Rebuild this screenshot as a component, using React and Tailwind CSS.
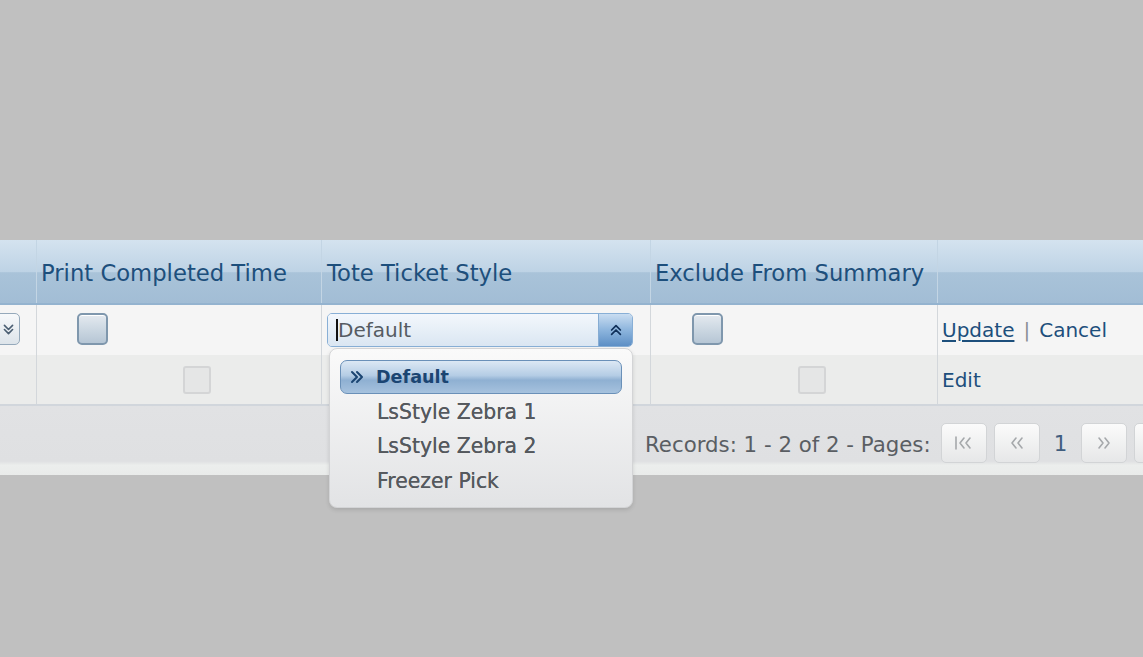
import React from 'react'

const font = { fontFamily: '"DejaVu Sans", Verdana, sans-serif' }

function DoubleChevron({ dir = 'up', color = '#1d3f66', size = 16 }) {
    const d = dir === 'up'
        ? 'M3 8 L8 3 L13 8 M3 13 L8 8 L13 13'
        : dir === 'down'
            ? 'M3 3 L8 8 L13 3 M3 8 L8 13 L13 8'
            : dir === 'right'
                ? 'M3 3 L8 8 L3 13 M8 3 L13 8 L8 13'
                : 'M8 3 L3 8 L8 13 M13 3 L8 8 L13 13'
    return (
        <svg width={size} height={size} viewBox="0 0 16 16">
            <path d={d} fill="none" stroke={color} strokeWidth="2" strokeLinecap="round" strokeLinejoin="round" />
        </svg>
    )
}

function EditCheckbox() {
    return <div className='w-[31px] h-[32px] rounded-[5px] border-2 border-[#7f97ad] bg-[linear-gradient(to_bottom,#e4e9ef_0%,#d3dde6_35%,#b6c6d5_100%)] shadow-[inset_0_1px_0_#ffffff]' />
}

function PlainCheckbox() {
    return <div className='w-[28px] h-[28px] rounded-[3px] border-2 border-[#d4d5d6] bg-[#e5e6e6]' />
}

function PagerButton({ children }) {
    return (
        <div className='w-[46px] h-[40px] rounded-[5px] border border-[#d2d4d6] bg-[linear-gradient(to_bottom,#fbfbfb,#e6e7e8)] flex items-center justify-center'>
            {children}
        </div>
    )
}

export default function App() {
    return (
        <div className='w-[1143px] h-[657px] bg-[#c0c0c0] overflow-hidden pt-[240px]' style={font}>
            <div className='w-[1200px] relative'>
                {/* header */}
                <div className='flex h-[65px] bg-[linear-gradient(to_bottom,#d4e3ef_0%,#bed3e5_50%,#a9c3d9_52%,#a2bdd5_100%)] border-b-2 border-[#94b3cf] text-[#1d4f7c] text-[22.7px]'>
                    <div className='w-[37px] border-r border-[#c3d5e4]' />
                    <div className='w-[285px] border-r border-[#c3d5e4] pl-[4px] pt-[16px]'>Print Completed Time</div>
                    <div className='w-[329px] border-r border-[#c3d5e4] pl-[5px] pt-[16px]'>Tote Ticket Style</div>
                    <div className='w-[287px] border-r border-[#c3d5e4] pl-[4px] pt-[16px]'>Exclude From Summary</div>
                    <div className='flex-1' />
                </div>

                {/* row 1 (edit) */}
                <div className='flex h-[50px] bg-[#f5f5f5] text-[20px] text-[#1d4f7c]'>
                    <div className='w-[37px] border-r border-[#d3d7db] pt-[8px] overflow-hidden'>
                        <div className='-ml-[14px] w-[34px] h-[32px] rounded-[5px] border border-[#95a9bb] bg-[linear-gradient(to_bottom,#f7f9fb,#dde4ea)] flex items-center justify-end pr-[4px]'>
                            <DoubleChevron dir='down' color='#4b5f73' size={13} />
                        </div>
                    </div>
                    <div className='w-[285px] border-r border-[#d3d7db] pl-[40px] pt-[8px]'>
                        <EditCheckbox />
                    </div>
                    <div className='w-[329px] border-r border-[#d3d7db] pl-[5px] pt-[8px] relative'>
                        <div className='w-[306px] h-[34px] rounded-[5px] border border-[#88afd6] flex overflow-hidden'>
                            <div className='flex-1 bg-[linear-gradient(to_bottom,#f3f7fc,#dae6f2)] flex items-center pl-[8px] text-[#555b62] text-[20px]'>
                                <span className='border-l-2 border-[#111] leading-[22px]'>Default</span>
                            </div>
                            <div className='w-[34px] bg-[linear-gradient(to_bottom,#c9ddf1_0%,#8db5dd_50%,#5d8fc5_100%)] border-l border-[#86acd3] flex items-center justify-center'>
                                <DoubleChevron dir='up' color='#10305a' size={14} />
                            </div>
                        </div>

                        {/* dropdown popup */}
                        <div className='absolute left-[7px] top-[43px] w-[304px] h-[160px] z-10 rounded-[8px] border border-[#d3d4d6] bg-[linear-gradient(to_bottom,#fafafa,#e2e3e5)] shadow-[0_2px_4px_rgba(0,0,0,0.12)] pt-[11px] px-[10px]'>
                            <div className='h-[34px] rounded-[7px] border border-[#6a90b8] bg-[linear-gradient(to_bottom,#dce8f4_0%,#b5cde5_45%,#8fb0d2_60%,#a6c2de_100%)] flex items-center pl-[8px] text-[#1b4572] font-bold text-[17.6px]'>
                                <DoubleChevron dir='right' color='#1b4572' size={16} />
                                <span className='ml-[11px]'>Default</span>
                            </div>
                            <div className='pl-[37px] text-[#55595e] text-[20.4px] [text-shadow:0_0_0.6px_#55595e]'>
                                <div className='h-[34px] leading-[34px] mt-[1px]'>LsStyle Zebra 1</div>
                                <div className='h-[35px] leading-[35px]'>LsStyle Zebra 2</div>
                                <div className='h-[35px] leading-[35px]'>Freezer Pick</div>
                            </div>
                        </div>
                    </div>
                    <div className='w-[287px] border-r border-[#d3d7db] pl-[41px] pt-[8px]'>
                        <EditCheckbox />
                    </div>
                    <div className='flex-1 pl-[4px] flex items-center'>
                        <span className='underline underline-offset-[3px]'>Update</span>
                        <span className='text-[#8a8f95] mx-[9px]'>|</span>
                        <span>Cancel</span>
                    </div>
                </div>

                {/* row 2 */}
                <div className='flex h-[51px] bg-[#ebeceb] border-b-2 border-[#d1d6dc] text-[20px] text-[#1d4f7c]'>
                    <div className='w-[37px] border-r border-[#d3d7db]' />
                    <div className='w-[285px] border-r border-[#d3d7db] pl-[146px] pt-[11px]'>
                        <PlainCheckbox />
                    </div>
                    <div className='w-[329px] border-r border-[#d3d7db]' />
                    <div className='w-[287px] border-r border-[#d3d7db] pl-[147px] pt-[11px]'>
                        <PlainCheckbox />
                    </div>
                    <div className='flex-1 pl-[4px] flex items-center'>Edit</div>
                </div>

                {/* footer / pager */}
                <div className='h-[69px] bg-[linear-gradient(to_bottom,#e1e2e4_0%,#dfe0e2_80%,#eceeed_86%,#e9ebea_100%)] flex items-start pt-[17px] text-[21.3px] text-[#5a5e63]'>
                    <div className='w-[645px]' />
                    <div className='flex items-center gap-[7px]'>
                        <span className='mr-[3px] pt-[3px]'>Records: 1 - 2 of 2 - Pages:</span>
                        <PagerButton>
                            <svg width="22" height="16" viewBox="0 0 22 16">
                                <path d="M3 2 L3 14 M11 3 L7 8 L11 13 M17 3 L13 8 L17 13" fill="none" stroke="#a5a8ab" strokeWidth="1.6" strokeLinecap="round" strokeLinejoin="round" />
                            </svg>
                        </PagerButton>
                        <PagerButton>
                            <svg width="16" height="16" viewBox="0 0 16 16">
                                <path d="M7 3 L3 8 L7 13 M13 3 L9 8 L13 13" fill="none" stroke="#a5a8ab" strokeWidth="1.6" strokeLinecap="round" strokeLinejoin="round" />
                            </svg>
                        </PagerButton>
                        <span className='text-[#3f5d7e] px-[7px] pt-[2px]'>1</span>
                        <PagerButton>
                            <svg width="16" height="16" viewBox="0 0 16 16">
                                <path d="M3 3 L7 8 L3 13 M9 3 L13 8 L9 13" fill="none" stroke="#a5a8ab" strokeWidth="1.6" strokeLinecap="round" strokeLinejoin="round" />
                            </svg>
                        </PagerButton>
                        <PagerButton>
                            <svg width="22" height="16" viewBox="0 0 22 16">
                                <path d="M5 3 L9 8 L5 13 M11 3 L15 8 L11 13 M19 2 L19 14" fill="none" stroke="#a5a8ab" strokeWidth="1.6" strokeLinecap="round" strokeLinejoin="round" />
                            </svg>
                        </PagerButton>
                    </div>
                </div>
            </div>
        </div>
    )
}
